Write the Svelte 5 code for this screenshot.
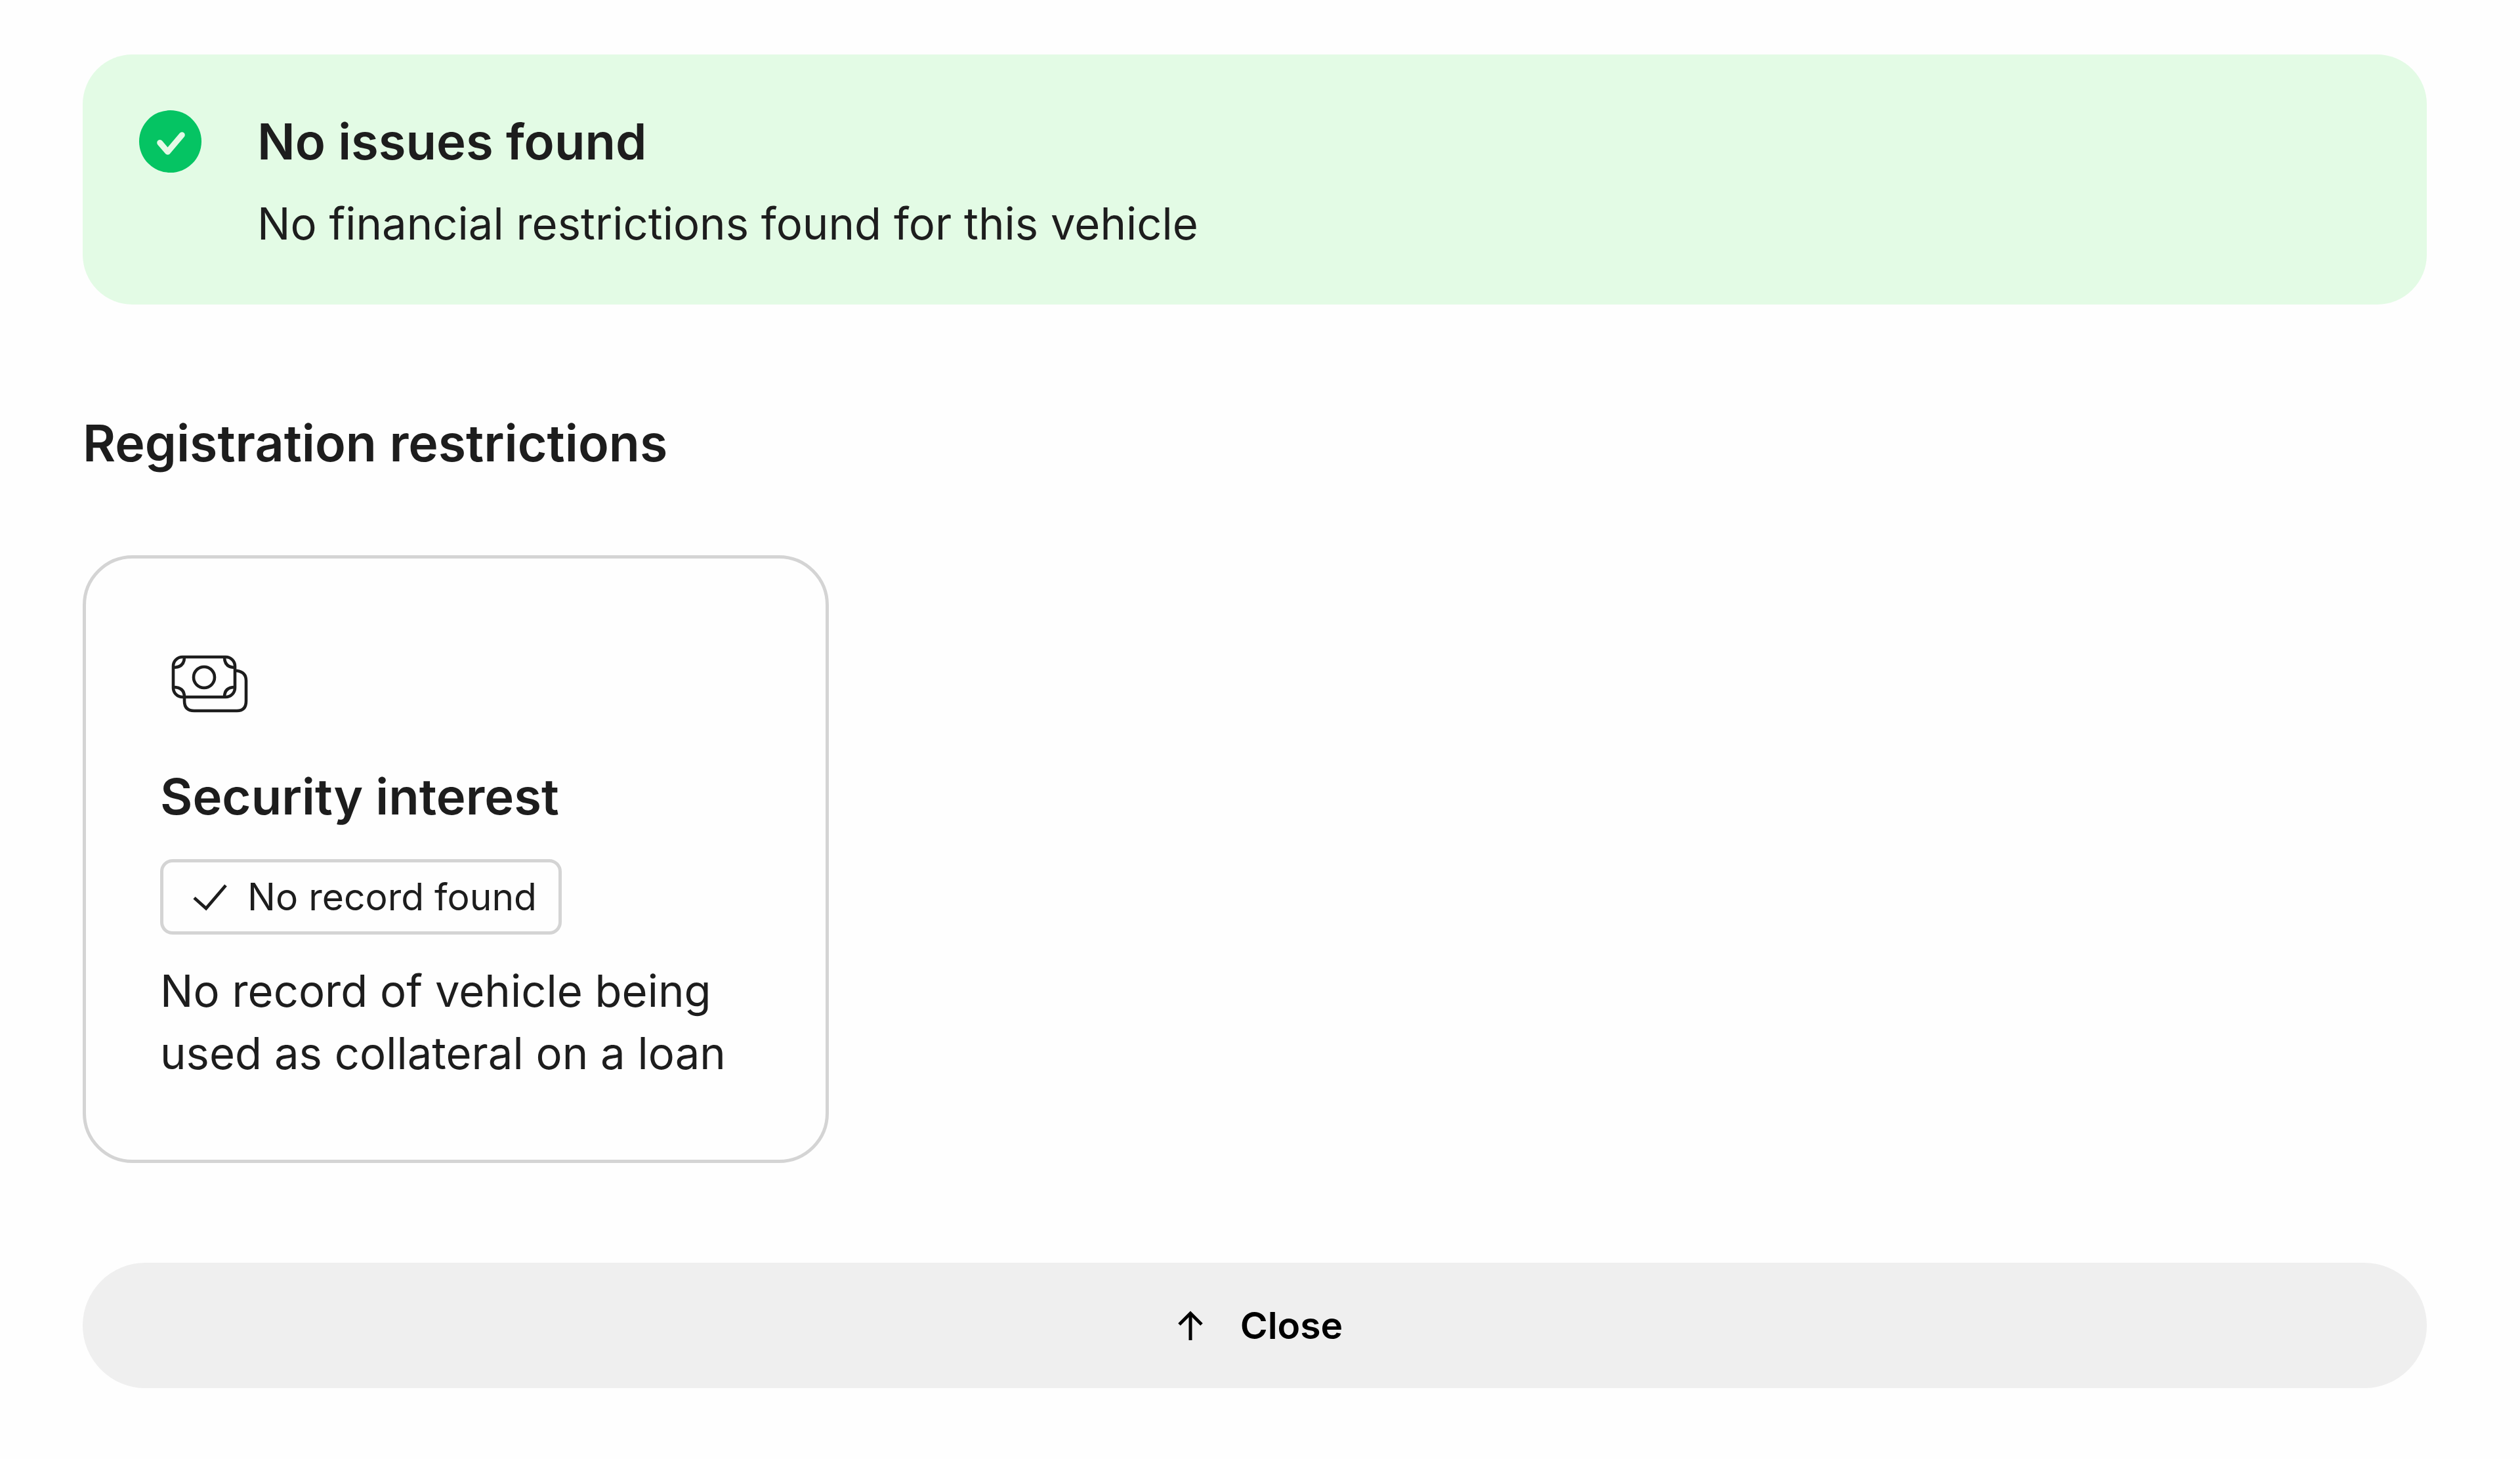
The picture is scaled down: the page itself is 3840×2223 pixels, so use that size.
<script>
  let { onclose = () => {} } = $props();

  const restrictions = [
    {
      title: 'Security interest',
      status: 'No record found',
      text: 'No record of vehicle being used as collateral on a loan'
    }
  ];
</script>

<main class="report">
  <section class="banner">
    <svg class="banner-icon" viewBox="0 0 96 96" aria-hidden="true">
      <circle cx="48" cy="48" r="48" fill="#05c463" />
      <path d="M32 50 L44 64 L66 38" fill="none" stroke="#e4fae6" stroke-width="9" stroke-linecap="round" stroke-linejoin="round" />
    </svg>
    <div class="banner-body">
      <h2>No issues found</h2>
      <p>No financial restrictions found for this vehicle</p>
    </div>
  </section>

  <h2 class="section-title">Registration restrictions</h2>

  <div class="cards">
    {#each restrictions as item}
      <article class="card">
        <svg class="card-icon" viewBox="0 0 152 152" fill="none" stroke="#1d1d1d" stroke-width="4.6" aria-hidden="true">
          <rect x="20" y="35" width="94" height="61" rx="14" />
          <circle cx="67" cy="66" r="16" />
          <path d="M20 51 Q37 51 37 35" />
          <path d="M98 35 Q98 51 114 51" />
          <path d="M20 81 Q37 81 37 96" />
          <path d="M98 96 Q98 81 114 81" />
          <path d="M114 56 H117 Q131 58 131 71 V102 Q131 117 117 117 H52 Q37 117 37 102 V96" />
        </svg>
        <h3>{item.title}</h3>
        <span class="badge">
          <svg class="badge-icon" viewBox="0 0 56 56" fill="none" stroke="#1d1d1d" stroke-width="4.8" aria-hidden="true">
            <path d="M3 29 L21 45 L51 10" />
          </svg>
          {item.status}
        </span>
        <p>{item.text}</p>
      </article>
    {/each}
  </div>

  <button class="close" type="button" onclick={onclose}>
    <svg class="close-icon" viewBox="0 0 56 56" fill="none" stroke="#000" stroke-width="5" aria-hidden="true">
      <path d="M28 50 V9" />
      <path d="M11 26 L28 9 L45 26" />
    </svg>
    Close
  </button>
</main>

<style>
  :global(body) {
    background: #fefefe;
  }

  .report {
    box-sizing: border-box;
    padding: 83px 142px 110px 126px;
    font-family: Inter, sans-serif;
    font-size: 67px;
    line-height: 95px;
    color: #1d1d1d;
  }

  h2,
  h3,
  p {
    margin: 0;
  }

  h2,
  h3 {
    font-size: 76px;
    font-weight: 600;
    line-height: 95px;
  }

  .banner {
    display: flex;
    align-items: flex-start;
    gap: 85px;
    padding: 85px 86px 76px;
    border-radius: 76px;
    background: #e3fbe5;
  }

  .banner-icon {
    flex: none;
    width: 95px;
    height: 95px;
  }

  .banner-body {
    display: flex;
    flex-direction: column;
    gap: 30px;
  }

  .section-title {
    margin: 164px 0 123px;
    font-size: 77px;
  }

  .cards {
    display: grid;
    grid-template-columns: repeat(3, 1fr);
    gap: 80px;
  }

  .card {
    display: flex;
    flex-direction: column;
    align-items: flex-start;
    padding: 115px 113px;
    border: 5px solid #d4d4d4;
    border-radius: 76px;
  }

  .card-icon {
    width: 152px;
    height: 152px;
  }

  .card h3 {
    margin: 48px 0;
  }

  .badge {
    display: flex;
    align-items: center;
    gap: 28px;
    box-sizing: border-box;
    height: 115px;
    margin-bottom: 38px;
    padding: 0 33px 0 44px;
    border: 5px solid #d4d4d4;
    border-radius: 19px;
    font-size: 57px;
  }

  .badge-icon {
    width: 56px;
    height: 56px;
  }

  .close {
    display: flex;
    align-items: center;
    justify-content: center;
    gap: 48px;
    width: 100%;
    height: 191px;
    margin-top: 152px;
    padding: 0 0 0 8px;
    border: 0;
    border-radius: 96px;
    background: #efefef;
    color: #000;
    font: 600 57px Inter, sans-serif;
    cursor: pointer;
  }

  .close-icon {
    width: 56px;
    height: 56px;
  }
</style>
